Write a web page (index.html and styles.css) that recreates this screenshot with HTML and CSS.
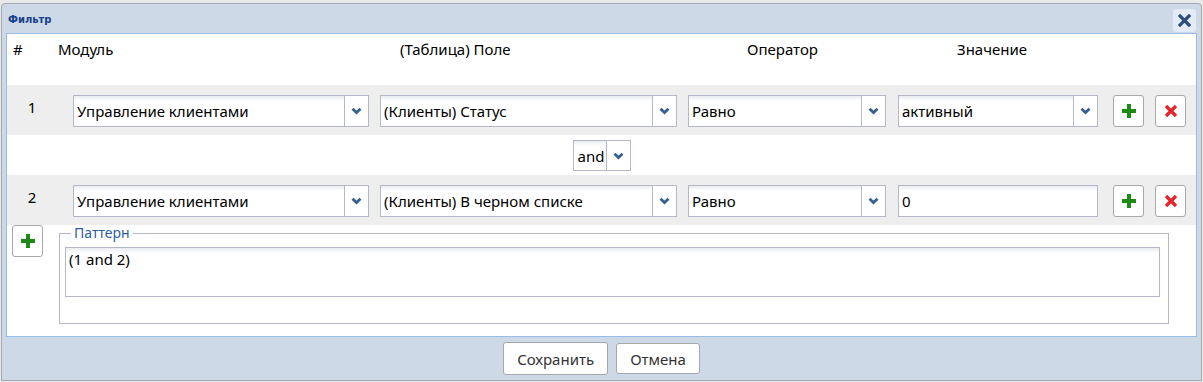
FILE: index.html
```html
<!DOCTYPE html>
<html lang="ru">
<head>
    <meta charset="UTF-8">
    <title>Фильтр</title>
    <link rel="stylesheet" href="styles.css">
</head>
<body>

    <div class="dialog">
        <div class="dialog-head">
            <span class="dialog-title">Фильтр</span>
            <button class="close-btn" title="Закрыть">
                <svg width="13" height="13" viewBox="0 0 13 13"><path d="M2 2 L11 11 M11 2 L2 11" stroke="#2e4f7c" stroke-width="3.2" stroke-linecap="square"/></svg>
            </button>
        </div>

        <div class="dialog-body">
            <div class="head-row">
                <span class="h-num">#</span>
                <span class="h-module">Модуль</span>
                <span class="h-field">(Таблица) Поле</span>
                <span class="h-op">Оператор</span>
                <span class="h-val">Значение</span>
            </div>

            <div class="cond-row">
                <div class="num">1</div>
                <div class="combo w-module"><span class="combo-text">Управление клиентами</span><span class="combo-arrow"></span></div>
                <div class="combo w-field"><span class="combo-text">(Клиенты) Статус</span><span class="combo-arrow"></span></div>
                <div class="combo w-op"><span class="combo-text">Равно</span><span class="combo-arrow"></span></div>
                <div class="combo w-val"><span class="combo-text">активный</span><span class="combo-arrow"></span></div>
                <button class="icon-btn add-btn"><span class="ico-plus"></span></button>
                <button class="icon-btn del-btn"><span class="ico-del"></span></button>
            </div>

            <div class="join-row">
                <div class="combo w-join"><span class="combo-text">and</span><span class="combo-arrow"></span></div>
            </div>

            <div class="cond-row">
                <div class="num">2</div>
                <div class="combo w-module"><span class="combo-text">Управление клиентами</span><span class="combo-arrow"></span></div>
                <div class="combo w-field"><span class="combo-text">(Клиенты) В черном списке</span><span class="combo-arrow"></span></div>
                <div class="combo w-op"><span class="combo-text">Равно</span><span class="combo-arrow"></span></div>
                <div class="combo w-val"><span class="combo-text">0</span></div>
                <button class="icon-btn add-btn"><span class="ico-plus"></span></button>
                <button class="icon-btn del-btn"><span class="ico-del"></span></button>
            </div>

            <div class="pattern-row">
                <button class="icon-btn add-btn add-cond"><span class="ico-plus"></span></button>
                <fieldset class="pattern">
                    <legend>Паттерн</legend>
                    <textarea class="pattern-text">(1 and 2)</textarea>
                </fieldset>
            </div>
        </div>

        <div class="dialog-foot">
            <button class="btn btn-save">Сохранить</button>
            <button class="btn">Отмена</button>
        </div>
    </div>

</body>
</html>
```

FILE: styles.css
```css
html, body {
    margin: 0;
    padding: 0;
    height: 100%;
    overflow: hidden;
    background: #e9e9e9;
    font-family: "Noto Sans", sans-serif;
    font-size: 15px;
    color: #000;
}

.dialog {
    margin: 3px 1px 0 1px;
    height: 378px;
    box-sizing: border-box;
    background: #cdd9e6;
    border: 1px solid #a3a9b1;
    border-radius: 4px 4px 0 0;
    padding: 0 4px;
    display: flex;
    flex-direction: column;
}

.dialog-head {
    height: 29px;
    display: flex;
    align-items: center;
    justify-content: space-between;
}

.dialog-title {
    font-family: "DejaVu Sans", sans-serif;
    font-weight: bold;
    font-size: 10px;
    color: #15428b;
    padding-left: 2px;
    margin-top: 2px;
}

.close-btn {
    width: 23px;
    height: 23px;
    padding: 0;
    margin-top: 3px;
    margin-right: 1px;
    border: none;
    border-radius: 3px;
    background: #e2ebf6;
    display: flex;
    align-items: center;
    justify-content: center;
}

.dialog-body {
    height: 304px;
    box-sizing: border-box;
    background: #fff;
    border: 1px solid #99bbe8;
}

/* header */
.head-row {
    height: 51px;
    display: flex;
    padding-left: 6px;
    padding-top: 5px;
    box-sizing: border-box;
    line-height: 20px;
}

.h-num { width: 45px; }
.h-module { width: 342px; }
.h-field { width: 347px; }
.h-op { width: 210px; }

/* condition rows */
.cond-row {
    height: 50px;
    box-sizing: border-box;
    padding-top: 10px;
    background: #eeeeee;
    display: flex;
    align-items: flex-start;
}

.num {
    width: 50px;
    margin-right: 16px;
    text-align: center;
    line-height: 20px;
    padding-top: 2px;
}

.combo {
    height: 32px;
    box-sizing: border-box;
    border: 1px solid #b5b8c8;
    background: linear-gradient(#e9ecef 0, #fff 5px);
    display: flex;
    align-items: center;
}

.combo-text {
    flex: 1;
    padding-left: 3px;
    white-space: nowrap;
    overflow: hidden;
}

.combo-arrow {
    width: 23px;
    height: 100%;
    border-left: 1px solid #b5b8c8;
    background: #fff url("data:image/svg+xml,%3Csvg xmlns='http://www.w3.org/2000/svg' width='11' height='8'%3E%3Cpath d='M1.5 1.8 L5.5 5.6 L9.5 1.8' fill='none' stroke='%23365f93' stroke-width='2.8'/%3E%3C/svg%3E") no-repeat center;
}

.w-module { width: 296px; margin-right: 11px; }
.w-field { width: 297px; margin-right: 11px; }
.w-op { width: 198px; margin-right: 12px; }
.w-val { width: 200px; margin-right: 15px; }

.icon-btn {
    width: 31px;
    height: 32px;
    padding: 0;
    box-sizing: border-box;
    background: #fff;
    border: 1px solid #a9a9a9;
    border-radius: 3px;
    display: flex;
    align-items: center;
    justify-content: center;
}

.add-btn { margin-right: 11px; }

.ico-plus {
    width: 14px;
    height: 14px;
    background:
        linear-gradient(#1d8a14, #1d8a14) center / 4px 14px no-repeat,
        linear-gradient(#1d8a14, #1d8a14) center / 14px 4px no-repeat;
}

.ico-del {
    width: 14px;
    height: 14px;
    background: url("data:image/svg+xml,%3Csvg xmlns='http://www.w3.org/2000/svg' width='14' height='14'%3E%3Cpath d='M2 2 L12 12 M12 2 L2 12' stroke='%23e3262b' stroke-width='3.4'/%3E%3C/svg%3E") no-repeat center;
}

/* and / or */
.join-row {
    height: 40px;
    display: flex;
    justify-content: center;
    align-items: flex-start;
    padding-top: 5px;
    box-sizing: border-box;
}

.w-join { width: 58px; height: 31px; }
.w-join .combo-text { padding-left: 4px; }

/* pattern */
.pattern-row {
    display: flex;
    align-items: flex-start;
    padding-left: 5px;
}

.add-cond { margin-right: 16px; }

.pattern {
    width: 1110px;
    box-sizing: border-box;
    margin: 0;
    padding: 0 8px 26px 5px;
    border: 1px solid #b5b8c8;
}

.pattern legend {
    margin-left: 6px;
    padding: 0 3px;
    font-size: 14px;
    line-height: 16px;
    color: #2f5da3;
}

.pattern-text {
    display: block;
    width: 100%;
    height: 50px;
    box-sizing: border-box;
    margin-top: 6px;
    padding: 2px 3px;
    border: 1px solid #b5b8c8;
    background: linear-gradient(#e9ecef 0, #fff 5px);
    font-family: "Noto Sans", sans-serif;
    font-size: 15px;
    line-height: 18px;
    resize: none;
}

/* footer */
.dialog-foot {
    flex: 1;
    display: flex;
    justify-content: center;
    align-items: center;
    gap: 8px;
}

.btn {
    height: 31px;
    padding: 0 13px;
    background: #fff;
    border: 1px solid #a7a7a7;
    border-radius: 3px;
    font-family: "Noto Sans", sans-serif;
    font-size: 15px;
    color: #333;
}

.btn-save {
    height: 33px;
}
```
